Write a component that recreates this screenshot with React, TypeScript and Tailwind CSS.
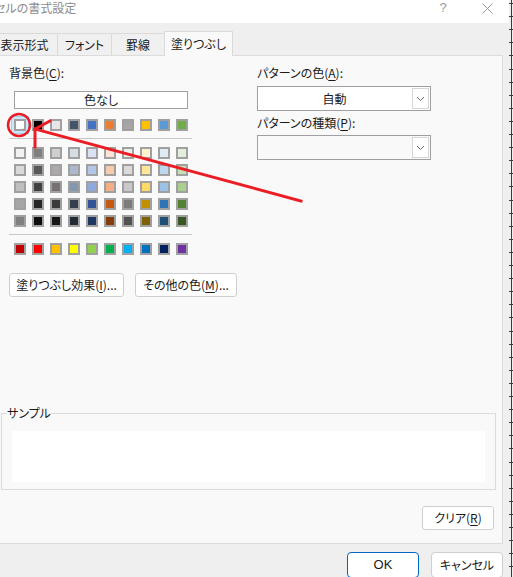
import React from "react";

const baseRow = ["#FFFFFF", "#000000", "#E7E6E6", "#44546A", "#4472C4", "#ED7D31", "#A5A5A5", "#FFC000", "#5B9BD5", "#70AD47"];

const tintRows = [
  ["#F2F2F2", "#7F7F7F", "#D0CECE", "#D6DCE4", "#D9E1F2", "#FCE4D6", "#EDEDED", "#FFF2CC", "#DDEBF7", "#E2EFDA"],
  ["#D9D9D9", "#595959", "#AEAAAA", "#ACB9CA", "#B4C6E7", "#F8CBAD", "#DBDBDB", "#FFE699", "#BDD7EE", "#C6E0B4"],
  ["#BFBFBF", "#404040", "#757171", "#8497B0", "#8EA9DB", "#F4B084", "#C9C9C9", "#FFD966", "#9BC2E6", "#A9D08E"],
  ["#A6A6A6", "#262626", "#3A3838", "#333F4F", "#305496", "#C65911", "#7B7B7B", "#BF8F00", "#2F75B5", "#548235"],
  ["#808080", "#0D0D0D", "#161616", "#222B35", "#203764", "#833C0C", "#525252", "#806000", "#1F4E78", "#375623"],
];

const standardRow = ["#C00000", "#FF0000", "#FFC000", "#FFFF00", "#92D050", "#00B050", "#00B0F0", "#0070C0", "#002060", "#7030A0"];

function Swatch({ color, selected }: { color: string; selected?: boolean }) {
  return (
    <div
      className={`w-[12px] h-[12px] border-2 border-[#a0a0a0] ${
        selected ? "shadow-[0_0_0_2px_#cce8ff,0_0_0_3px_#9fd0f5]" : ""
      }`}
      style={{ backgroundColor: color }}
    />
  );
}

function SwatchRow({ colors, first }: { colors: string[]; first?: boolean }) {
  return (
    <div className="flex gap-[6px] ml-[5px]">
      {colors.map((c, i) => (
        <Swatch key={i} color={c} selected={first && i === 0} />
      ))}
    </div>
  );
}

function Chevron() {
  return (
    <svg width="9" height="6" viewBox="0 0 9 6">
      <polyline points="1,1 4.5,4.5 8,1" fill="none" stroke="#6b6b6b" strokeWidth="1" />
    </svg>
  );
}

function Dropdown({ value, disabled }: { value?: string; disabled?: boolean }) {
  return (
    <div
      className={`w-[174px] h-[25px] border border-[#a0a0a0] flex ${
        disabled ? "bg-[#f9f9f9]" : "bg-white"
      }`}
    >
      <div className="flex-1 flex items-center justify-center">{value}</div>
      <div className="w-[17px] m-[1px] border border-[#d6d6d6] bg-white flex items-center justify-center">
        <Chevron />
      </div>
    </div>
  );
}

function Btn({ children, w }: { children: React.ReactNode; w: string }) {
  return (
    <div className={`${w} h-[24px] bg-white border border-[#cfcfcf] rounded-[3px] flex items-center justify-center`}>
      {children}
    </div>
  );
}

function U({ children }: { children: React.ReactNode }) {
  return <span className="underline underline-offset-2">{children}</span>;
}

export default function App() {
  return (
    <div className="relative w-[513px] h-[577px] overflow-hidden bg-[#efefef] text-[12px] leading-[14px] text-[#1a1a1a] font-['Noto_Sans_CJK_JP',sans-serif] [font-feature-settings:'palt']">
      <div className="flex h-full">
        <div className="w-[509px] flex flex-col shrink-0">
          {/* title bar */}
          <div className="h-[23px] bg-white flex items-start shrink-0">
            <span className="ml-[-6px] mt-[1px] text-[#8c8c8c] whitespace-nowrap">セルの書式設定</span>
            <div className="flex-1" />
            <div className="w-[46px] flex justify-center mt-[1px] text-[13px] leading-[14px] text-[#9a9a9a] font-['Liberation_Sans',sans-serif]">
              ?
            </div>
            <div className="w-[43px] flex justify-center pt-[3px]">
              <svg width="11" height="11" viewBox="0 0 11 11">
                <path d="M0.5 0.5L10.5 10.5M10.5 0.5L0.5 10.5" stroke="#9a9a9a" strokeWidth="1" />
              </svg>
            </div>
          </div>

          {/* tabs */}
          <div className="h-[32px] flex items-end shrink-0">
            <div className="ml-[-9px] w-[67px] h-[22px] border border-b-0 border-[#dadada] bg-[#f0f0f0] flex items-center justify-center">
              表示形式
            </div>
            <div className="ml-[-1px] w-[55px] h-[22px] border border-b-0 border-[#dadada] bg-[#f0f0f0] flex items-center justify-center">
              フォント
            </div>
            <div className="ml-[-1px] w-[54px] h-[22px] border border-b-0 border-[#dadada] bg-[#f0f0f0] flex items-center justify-center">
              罫線
            </div>
            <div className="relative z-10 ml-[-1px] mb-[-1px] w-[69px] h-[25px] border border-b-0 border-[#dadada] bg-[#f9f9f9] flex items-center justify-center">
              塗りつぶし
            </div>
          </div>

          {/* panel */}
          <div className="w-[503px] h-[489px] bg-[#f9f9f9] border-t border-r border-b border-[#dcdcdc] flex flex-col shrink-0">
            <div className="flex pt-[10px]">
              {/* left column */}
              <div className="w-[257px] pl-[9px] flex flex-col">
                <div>
                  背景色(<U>C</U>):
                </div>
                <div className="mt-[11px] ml-[5px] w-[174px] h-[18px] border border-[#a0a0a0] bg-white flex items-center justify-center">
                  色なし
                </div>
                <div className="mt-[10px]">
                  <SwatchRow colors={baseRow} first />
                </div>
                <div className="mt-[7px] w-[183px] h-px bg-[#c8c8c8]" />
                <div className="mt-[8px] flex flex-col gap-[5px]">
                  {tintRows.map((r, i) => (
                    <SwatchRow key={i} colors={r} />
                  ))}
                </div>
                <div className="mt-[7px] w-[183px] h-px bg-[#c8c8c8]" />
                <div className="mt-[8px]">
                  <SwatchRow colors={standardRow} />
                </div>
                <div className="mt-[18px] flex gap-[11px]">
                  <Btn w="w-[115px]">
                    塗りつぶし効果(<U>I</U>)...
                  </Btn>
                  <Btn w="w-[102px]">
                    その他の色(<U>M</U>)...
                  </Btn>
                </div>
              </div>

              {/* right column */}
              <div className="flex flex-col">
                <div>
                  パターンの色(<U>A</U>):
                </div>
                <div className="mt-[6px]">
                  <Dropdown value="自動" />
                </div>
                <div className="mt-[5px]">
                  パターンの種類(<U>P</U>):
                </div>
                <div className="mt-[5px]">
                  <Dropdown disabled />
                </div>
              </div>
            </div>

            {/* sample */}
            <fieldset className="mt-auto ml-[1px] w-[495px] border border-[#dcdcdc] px-[10px] pb-[7px]">
              <legend className="ml-[-5px] leading-[14px]">サンプル</legend>
              <div className="mt-[11px] h-[51px] bg-white" />
            </fieldset>

            <div className="mt-[16px] pb-[13px] flex justify-end pr-[8px]">
              <Btn w="w-[72px] h-[23px]">
                クリア(<U>R</U>)
              </Btn>
            </div>
          </div>

          {/* bottom buttons */}
          <div className="flex-1 flex justify-end items-start pt-[8px] pr-[6px] gap-[12px]">
            <div className="w-[72px] h-[26px] bg-white border border-[#0067c0] rounded-[4px] flex items-center justify-center font-['Liberation_Sans',sans-serif] text-[13px]">
              OK
            </div>
            <div className="w-[72px] h-[26px] bg-white border border-[#cfcfcf] rounded-[4px] flex items-center justify-center">
              キャンセル
            </div>
          </div>
        </div>

        {/* sheet edge behind the dialog */}
        <svg width="4" height="577" viewBox="0 0 4 577" className="shrink-0">
          <line x1="2.5" y1="0" x2="2.5" y2="577" stroke="#3a3a3a" strokeWidth="1" />
          {Array.from({ length: 44 }).map((_, i) => {
            const y = Math.round(3 + i * 13.1) + 0.5;
            return <line key={i} x1="0" y1={y} x2="4" y2={y} stroke="#3a3a3a" strokeWidth="1" />;
          })}
        </svg>
      </div>

      {/* red annotation */}
      <svg className="absolute inset-0 pointer-events-none" width="513" height="577" viewBox="0 0 513 577">
        <circle cx="19" cy="125" r="11" fill="none" stroke="#ec1c24" strokeWidth="2.5" />
        <g stroke="#ec1c24" strokeWidth="3" strokeLinecap="square" fill="none">
          <line x1="301" y1="201" x2="35" y2="129" />
          <line x1="35" y1="129" x2="50" y2="121" />
          <line x1="35" y1="131" x2="35" y2="147" />
        </g>
      </svg>
    </div>
  );
}
